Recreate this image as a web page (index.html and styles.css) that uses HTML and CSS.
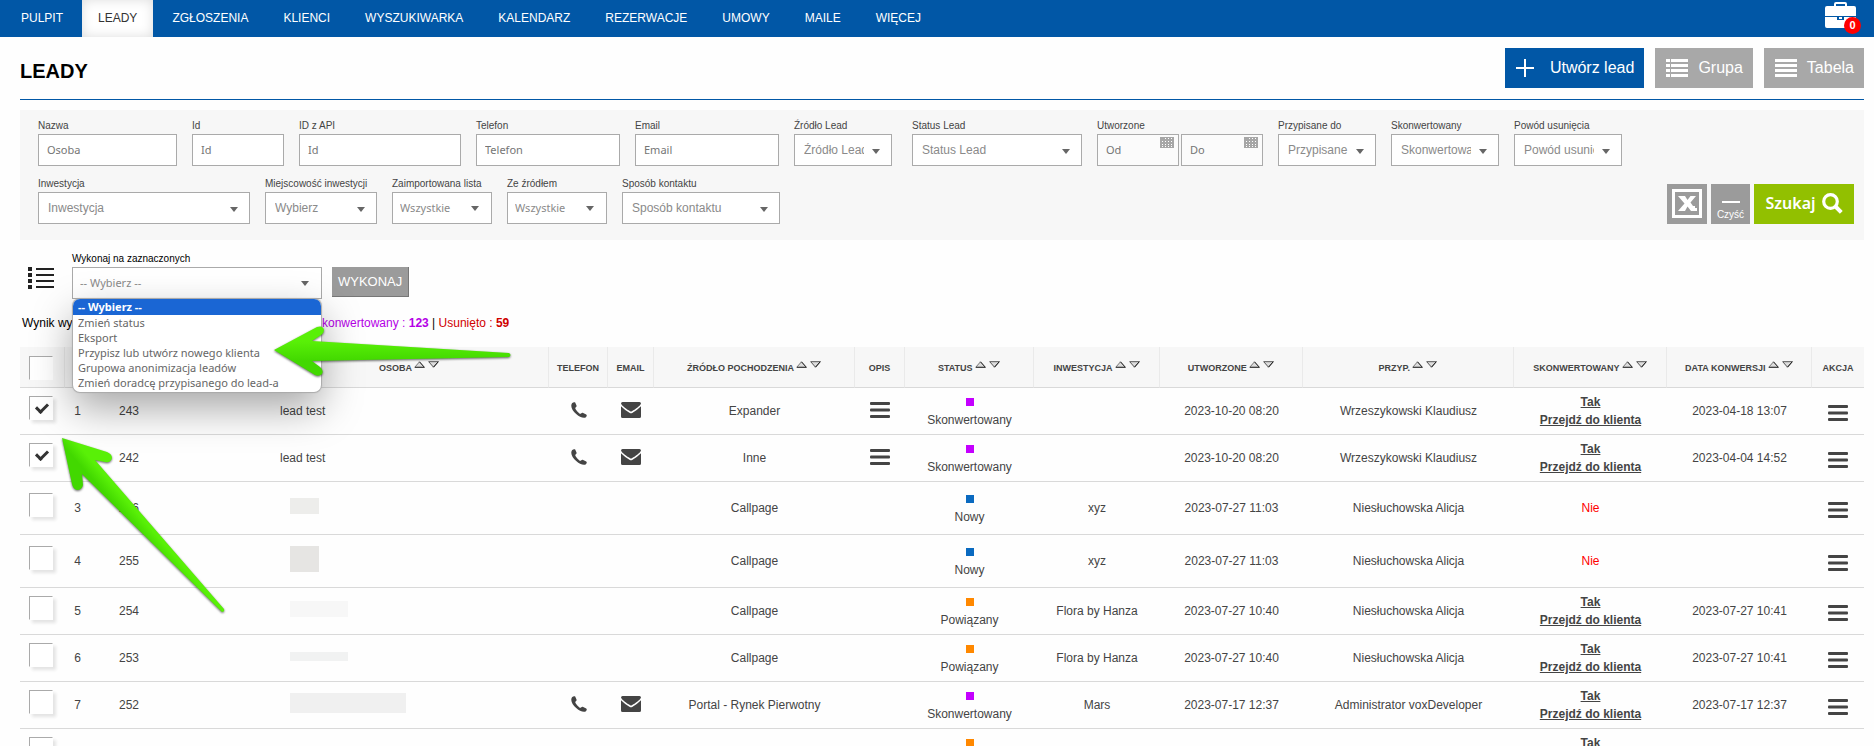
FILE: index.html
```html
<!DOCTYPE html>
<html lang="pl">
<head>
<meta charset="UTF-8">
<meta name="viewport" content="width=device-width, initial-scale=1.0">
<title>Leady</title>
<link rel="stylesheet" href="styles.css">
</head>
<body>

<!-- Shared icons -->
<svg class="icon-defs" aria-hidden="true">
  <symbol id="icon-phone" viewBox="0 0 16 16"><path d="M1 1.2C2 .2 3.600-.2 4.200.6L5.600 3.700C6 4.600 4.600 5.300 4.300 6.100C4 7 7.500 11.300 9 11.700C10 11.900 10.700 10.400 11.700 10.700L15.200 12.400C16.300 13 15.600 14.700 14.600 15.400C10.500 18-3 7.500 1 1.200Z"/></symbol>
  <symbol id="icon-mail" viewBox="0 0 20 16"><path d="M1.500 0H18.500Q20 .2 20 1.800Q18 5 10.800 9.300Q10 9.700 9.200 9.300Q2 5 0 1.800Q0 .2 1.500 0Z"/><path d="M0 4.300Q3 7.500 8.800 11Q10 11.700 11.200 11Q17 7.500 20 4.300V14.500Q20 16 18.500 16H1.500Q0 16 0 14.500Z"/></symbol>
  <symbol id="icon-bars" viewBox="0 0 20 16"><rect width="20" height="3" rx="1"/><rect y="6.500" width="20" height="3" rx="1"/><rect y="13" width="20" height="3" rx="1"/></symbol>
  <symbol id="icon-sort" viewBox="0 0 25 7"><path d="M.7 6.300L5.500.8L10.300 6.300Z" fill="#ddd" stroke="#777" stroke-width="1"/><path d="M5.500.8L10.300 6.300H1" fill="none" stroke="#333"/><path d="M14.700.7H24.300L19.500 6.200Z" fill="#ddd" stroke="#555" stroke-width="1"/><path d="M24.300.7L19.500 6.200" stroke="#222"/></symbol>
  <symbol id="icon-calendar" viewBox="0 0 14 11"><path fill="#a6a6a6" d="M0 0H14V11H0Z"/><path stroke="#fff" stroke-dasharray="1 2" fill="none" d="M5 1.500H14M2 4.500H14M2 7.500H14M2 9.500H14"/></symbol>
</svg>

<nav class="top-nav">
  <a href="#">PULPIT</a>
  <a href="#" class="active">LEADY</a>
  <a href="#">ZGŁOSZENIA</a>
  <a href="#">KLIENCI</a>
  <a href="#">WYSZUKIWARKA</a>
  <a href="#">KALENDARZ</a>
  <a href="#">REZERWACJE</a>
  <a href="#">UMOWY</a>
  <a href="#">MAILE</a>
  <a href="#">WIĘCEJ</a>
  <button class="briefcase" type="button" aria-label="Schowek">
    <svg width="31" height="26" viewBox="0 0 31 26" fill="#fff"><path d="M9 4V2Q9 0 11 0H20Q22 0 22 2V4H29Q31 4 31 6V14H0V6Q0 4 2 4ZM11 4H20V2H11Z"/><path d="M0 15H12V18H19V15H31V24Q31 26 29 26H2Q0 26 0 24Z"/><path d="M14 15H17V17H14Z"/></svg>
    <span class="badge">0</span>
  </button>
</nav>

<main class="page">
  <header class="page-header">
    <h1>LEADY</h1>
    <div class="header-buttons">
      <button class="btn btn-create" type="button">
        <svg width="18" height="18" viewBox="0 0 18 18" stroke="#fff" stroke-width="2"><path d="M9 0V18M0 9H18"/></svg>
        Utwórz lead
      </button>
      <button class="btn btn-view" type="button">
        <svg width="22" height="18" viewBox="0 0 22 18" fill="#fff"><path d="M0 0H4V3H0ZM5 0H22V3H5ZM0 5H4V8H0ZM5 5H22V8H5ZM0 10H4V13H0ZM5 10H22V13H5ZM0 15H4V18H0ZM5 15H22V18H5Z"/></svg>
        Grupa
      </button>
      <button class="btn btn-view" type="button">
        <svg width="22" height="18" viewBox="0 0 22 18" fill="#fff"><path d="M0 0H22V3H0ZM0 5H22V8H0ZM0 10H22V13H0ZM0 15H22V18H0Z"/></svg>
        Tabela
      </button>
    </div>
  </header>

  <form class="filters">
    <div class="filter-row">
      <div class="field w-140"><label for="f-name">Nazwa</label><input id="f-name" type="text" placeholder="Osoba"></div>
      <div class="field w-92"><label for="f-id">Id</label><input id="f-id" type="text" placeholder="Id"></div>
      <div class="field w-162"><label for="f-api">ID z API</label><input id="f-api" type="text" placeholder="Id"></div>
      <div class="field w-144"><label for="f-phone">Telefon</label><input id="f-phone" type="text" placeholder="Telefon"></div>
      <div class="field w-144"><label for="f-email">Email</label><input id="f-email" type="text" placeholder="Email"></div>
      <div class="field w-98"><label for="f-source">Źródło Lead</label><div class="select"><select id="f-source"><option>Źródło Lead</option></select></div></div>
      <div class="field w-170 status-field"><label for="f-status">Status Lead</label><div class="select"><select id="f-status"><option>Status Lead</option></select></div></div>
      <div class="field">
        <label for="f-from">Utworzone</label>
        <div class="date-range">
          <div class="date"><input id="f-from" type="text" placeholder="Od"><svg><use href="#icon-calendar"/></svg></div>
          <div class="date"><input type="text" placeholder="Do" aria-label="Utworzone do"><svg><use href="#icon-calendar"/></svg></div>
        </div>
      </div>
      <div class="field w-98"><label for="f-assigned">Przypisane do</label><div class="select"><select id="f-assigned"><option>Przypisane do</option></select></div></div>
      <div class="field w-108"><label for="f-converted">Skonwertowany</label><div class="select"><select id="f-converted"><option>Skonwertowany</option></select></div></div>
      <div class="field w-108"><label for="f-reason">Powód usunięcia</label><div class="select"><select id="f-reason"><option>Powód usunięcia</option></select></div></div>
    </div>
    <div class="filter-row">
      <div class="field w-212"><label for="f-inv">Inwestycja</label><div class="select"><select id="f-inv"><option>Inwestycja</option></select></div></div>
      <div class="field w-112"><label for="f-city">Miejscowość inwestycji</label><div class="select"><select id="f-city"><option>Wybierz</option></select></div></div>
      <div class="field w-100"><label for="f-import">Zaimportowana lista</label><div class="select plain"><select id="f-import"><option>Wszystkie</option></select></div></div>
      <div class="field w-100"><label for="f-with">Ze źródłem</label><div class="select plain"><select id="f-with"><option>Wszystkie</option></select></div></div>
      <div class="field w-158"><label for="f-contact">Sposób kontaktu</label><div class="select"><select id="f-contact"><option>Sposób kontaktu</option></select></div></div>
      <div class="filter-buttons">
        <button class="btn-excel" type="button" aria-label="Excel">
          <svg width="30" height="29" viewBox="0 0 30 29"><rect x="1.500" y="1.500" width="27" height="26" fill="none" stroke="#fff" stroke-width="3"/><path fill="#fff" d="M6 7H13L15.500 11L18.500 7H24L18.500 13.500L21 17H23V19H25V22H19L15.500 17.500L13 22H6L12.500 14.500Z"/></svg>
        </button>
        <button class="btn-clear" type="button">Czyść</button>
        <button class="btn-search" type="submit">Szukaj
          <svg width="21" height="21" viewBox="0 0 21 21" fill="none" stroke="#fff"><circle cx="8.500" cy="8.500" r="6.800" stroke-width="3.200"/><path d="M13.500 13.500L19.300 19.300" stroke-width="4"/></svg>
        </button>
      </div>
    </div>
  </form>

  <section class="bulk">
    <svg class="bulk-icon" width="26" height="23" viewBox="0 0 26 23" fill="#222"><path d="M0 0H4V4H0ZM8 1H26V3H8ZM0 6H4V10H0ZM8 7H26V9H8ZM0 12H4V16H0ZM8 13H26V15H8ZM0 18H4V22H0ZM8 19H26V21H8Z"/></svg>
    <div class="field bulk-field">
      <label for="bulk-action">Wykonaj na zaznaczonych</label>
      <div class="select plain"><select id="bulk-action"><option>-- Wybierz --</option></select></div>
      <ul class="options" role="listbox">
        <li class="selected" role="option">-- Wybierz --</li>
        <li role="option">Zmień status</li>
        <li role="option">Eksport</li>
        <li role="option">Przypisz lub utwórz nowego klienta</li>
        <li role="option">Grupowa anonimizacja leadów</li>
        <li role="option">Zmień doradcę przypisanego do lead-a</li>
      </ul>
    </div>
    <button class="btn-run" type="button">WYKONAJ</button>
  </section>

  <p class="summary"><span class="summary-total">Wynik wyszukiwania</span><span class="violet">Skonwertowany : <b>123</b></span>&nbsp;|&nbsp;<span class="red">Usunięto : <b>59</b></span></p>

  <table class="leads">
    <colgroup>
      <col class="c-check"><col class="c-no"><col class="c-id"><col class="c-gap"><col class="c-person"><col class="c-phone"><col class="c-mail"><col class="c-source"><col class="c-desc"><col class="c-status"><col class="c-inv"><col class="c-created"><col class="c-assigned"><col class="c-conv"><col class="c-date"><col class="c-action">
    </colgroup>
    <thead>
      <tr>
        <th><input type="checkbox" aria-label="Zaznacz wszystkie"></th>
        <th></th><th></th><th></th>
        <th>OSOBA <svg class="sort"><use href="#icon-sort"/></svg></th>
        <th>TELEFON</th>
        <th>EMAIL</th>
        <th>ŹRÓDŁO POCHODZENIA <svg class="sort"><use href="#icon-sort"/></svg></th>
        <th>OPIS</th>
        <th>STATUS <svg class="sort"><use href="#icon-sort"/></svg></th>
        <th>INWESTYCJA <svg class="sort"><use href="#icon-sort"/></svg></th>
        <th>UTWORZONE <svg class="sort"><use href="#icon-sort"/></svg></th>
        <th>PRZYP. <svg class="sort"><use href="#icon-sort"/></svg></th>
        <th>SKONWERTOWANY <svg class="sort"><use href="#icon-sort"/></svg></th>
        <th>DATA KONWERSJI <svg class="sort"><use href="#icon-sort"/></svg></th>
        <th>AKCJA</th>
      </tr>
    </thead>
    <tbody>
      <tr>
        <td><input type="checkbox" checked aria-label="Lead 243"></td><td>1</td><td>243</td><td></td>
        <td class="person">lead test</td>
        <td><svg class="phone"><use href="#icon-phone"/></svg></td>
        <td><svg class="mail"><use href="#icon-mail"/></svg></td>
        <td>Expander</td>
        <td><svg class="bars"><use href="#icon-bars"/></svg></td>
        <td><i class="dot violet-bg"></i>Skonwertowany</td>
        <td></td><td>2023-10-20 08:20</td><td>Wrzeszykowski Klaudiusz</td>
        <td><a href="#">Tak</a><br><a href="#">Przejdź do klienta</a></td>
        <td>2023-04-18 13:07</td>
        <td class="action"><svg class="bars"><use href="#icon-bars"/></svg></td>
      </tr>
      <tr>
        <td><input type="checkbox" checked aria-label="Lead 242"></td><td>2</td><td>242</td><td></td>
        <td class="person">lead test</td>
        <td><svg class="phone"><use href="#icon-phone"/></svg></td>
        <td><svg class="mail"><use href="#icon-mail"/></svg></td>
        <td>Inne</td>
        <td><svg class="bars"><use href="#icon-bars"/></svg></td>
        <td><i class="dot violet-bg"></i>Skonwertowany</td>
        <td></td><td>2023-10-20 08:20</td><td>Wrzeszykowski Klaudiusz</td>
        <td><a href="#">Tak</a><br><a href="#">Przejdź do klienta</a></td>
        <td>2023-04-04 14:52</td>
        <td class="action"><svg class="bars"><use href="#icon-bars"/></svg></td>
      </tr>
      <tr class="tall">
        <td><input type="checkbox" aria-label="Lead 256"></td><td>3</td><td>256</td><td></td>
        <td class="person"><span class="mask mask-a"></span></td>
        <td></td><td></td><td>Callpage</td><td></td>
        <td><i class="dot blue-bg"></i>Nowy</td>
        <td>xyz</td><td>2023-07-27 11:03</td><td>Niesłuchowska Alicja</td>
        <td class="no">Nie</td><td></td>
        <td class="action"><svg class="bars"><use href="#icon-bars"/></svg></td>
      </tr>
      <tr class="tall">
        <td><input type="checkbox" aria-label="Lead 255"></td><td>4</td><td>255</td><td></td>
        <td class="person"><span class="mask mask-b"></span></td>
        <td></td><td></td><td>Callpage</td><td></td>
        <td><i class="dot blue-bg"></i>Nowy</td>
        <td>xyz</td><td>2023-07-27 11:03</td><td>Niesłuchowska Alicja</td>
        <td class="no">Nie</td><td></td>
        <td class="action"><svg class="bars"><use href="#icon-bars"/></svg></td>
      </tr>
      <tr>
        <td><input type="checkbox" aria-label="Lead 254"></td><td>5</td><td>254</td><td></td>
        <td class="person"><span class="mask mask-c"></span></td>
        <td></td><td></td><td>Callpage</td><td></td>
        <td><i class="dot orange-bg"></i>Powiązany</td>
        <td>Flora by Hanza</td><td>2023-07-27 10:40</td><td>Niesłuchowska Alicja</td>
        <td><a href="#">Tak</a><br><a href="#">Przejdź do klienta</a></td>
        <td>2023-07-27 10:41</td>
        <td class="action"><svg class="bars"><use href="#icon-bars"/></svg></td>
      </tr>
      <tr>
        <td><input type="checkbox" aria-label="Lead 253"></td><td>6</td><td>253</td><td></td>
        <td class="person"><span class="mask mask-d"></span></td>
        <td></td><td></td><td>Callpage</td><td></td>
        <td><i class="dot orange-bg"></i>Powiązany</td>
        <td>Flora by Hanza</td><td>2023-07-27 10:40</td><td>Niesłuchowska Alicja</td>
        <td><a href="#">Tak</a><br><a href="#">Przejdź do klienta</a></td>
        <td>2023-07-27 10:41</td>
        <td class="action"><svg class="bars"><use href="#icon-bars"/></svg></td>
      </tr>
      <tr>
        <td><input type="checkbox" aria-label="Lead 252"></td><td>7</td><td>252</td><td></td>
        <td class="person"><span class="mask mask-e"></span></td>
        <td><svg class="phone"><use href="#icon-phone"/></svg></td>
        <td><svg class="mail"><use href="#icon-mail"/></svg></td>
        <td>Portal - Rynek Pierwotny</td><td></td>
        <td><i class="dot violet-bg"></i>Skonwertowany</td>
        <td>Mars</td><td>2023-07-17 12:37</td><td>Administrator voxDeveloper</td>
        <td><a href="#">Tak</a><br><a href="#">Przejdź do klienta</a></td>
        <td>2023-07-17 12:37</td>
        <td class="action"><svg class="bars"><use href="#icon-bars"/></svg></td>
      </tr>
      <tr>
        <td><input type="checkbox" aria-label="Lead"></td><td></td><td></td><td></td>
        <td></td><td></td><td></td><td></td><td></td>
        <td><i class="dot orange-bg"></i>&nbsp;</td>
        <td></td><td></td><td></td>
        <td><a href="#">Tak</a><br>&nbsp;</td>
        <td></td><td></td>
      </tr>
    </tbody>
  </table>
</main>

<!-- Pointer arrows over the page -->
<svg class="arrows" width="520" height="620" viewBox="0 0 520 620" aria-hidden="true">
  <defs>
    <linearGradient id="green-a" x1="0" y1="0" x2="0" y2="1"><stop offset=".3" stop-color="#59f007"/><stop offset=".7" stop-color="#42d800"/></linearGradient>
    <linearGradient id="green-b" gradientUnits="userSpaceOnUse" x1="101" y1="465" x2="86" y2="478"><stop offset=".2" stop-color="#59f007"/><stop offset=".8" stop-color="#42d800"/></linearGradient>
  </defs>
  <path fill="url(#green-a)" d="M274 350L317 327Q323 325 324 330Q324 333 321 335L312 341L509 353Q512 355 509 357L312 361L320 367Q324 370 322 374Q319 377 315 375Z"/>
  <path fill="url(#green-b)" d="M62 438L107 452Q112 454 112 458Q111 463 105 462L95 460L224 609Q225 612 222 612L82 474L83 485Q82 490 77 490Q73 489 72 484Z"/>
</svg>

</body>
</html>
```

FILE: styles.css
```css
/* --- Base --- */
* {
  box-sizing: border-box;
}

body {
  margin: 0;
  background: #fefefe;
  color: #444;
  font-family: "Liberation Sans", Arial, sans-serif;
  font-size: 12px;
  line-height: 18px;
  overflow: hidden;
}

button,
input,
select {
  font-family: inherit;
  margin: 0;
}

button {
  border: none;
  border-radius: 0;
  color: #fff;
  cursor: pointer;
}

.icon-defs {
  display: none;
}

/* --- Navigation --- */
.top-nav {
  display: flex;
  gap: 3px;
  height: 37px;
  padding: 0 15px 0 5px;
  background: #0157a6;
}

.top-nav a {
  padding: 0 16px;
  line-height: 36px;
  color: #fff;
  text-decoration: none;
}

.top-nav a.active {
  background: #fff;
  color: #333;
  box-shadow: inset 0 0 12px #ddd;
}

.briefcase {
  position: relative;
  margin-left: auto;
  padding: 2px 3px 0 0;
  background: none;
  display: flex;
}

.badge {
  position: absolute;
  top: 17px;
  right: -2px;
  width: 17px;
  height: 17px;
  border-radius: 50%;
  background: red;
  font-size: 11px;
  font-weight: bold;
  line-height: 17px;
}

/* --- Page header --- */
.page {
  padding: 0 10px 0 20px;
}

.page-header {
  display: flex;
  justify-content: space-between;
  height: 63px;
  padding-top: 11px;
  border-bottom: 1px solid #0157a6;
}

h1 {
  margin: 0;
  color: #000;
  font-size: 20px;
  line-height: 46px;
}

.header-buttons {
  display: flex;
  gap: 11px;
}

.btn {
  display: flex;
  align-items: center;
  height: 40px;
  padding: 0 10px 0 11px;
  font-size: 16px;
}

.btn-create {
  gap: 16px;
  background: #0157a6;
}

.btn-view {
  gap: 10px;
  background: #a8a8a8;
}

/* --- Filters --- */
.filters {
  margin-top: 10px;
  padding: 8px 10px 16px 18px;
  background: #f7f7f7;
}

.filter-row {
  display: flex;
  gap: 15px;
}

.filter-row + .filter-row {
  margin-top: 10px;
}

.field label {
  display: block;
  font-size: 10px;
  line-height: 16px;
  white-space: nowrap;
}

.w-92 { width: 92px; }
.w-98 { width: 98px; }
.w-100 { width: 100px; }
.w-108 { width: 108px; }
.w-112 { width: 112px; }
.w-140 { width: 139px; }
.w-144 { width: 144px; }
.w-158 { width: 158px; }
.w-162 { width: 162px; }
.w-170 { width: 170px; }
.w-212 { width: 212px; }

.status-field {
  margin-left: 5px;
}

.field input,
.field select {
  display: block;
  width: 100%;
  height: 32px;
  padding: 0 8px 2px;
  border: 1px solid #aaa;
  border-radius: 0;
  background: #fff;
  color: #8a8a8a;
  font-size: 12px;
}

.field input {
  font-family: "Noto Sans", sans-serif;
  font-size: 11px;
}

.field input::placeholder {
  color: #757575;
}

.field select {
  appearance: none;
  padding: 0 27px 0 9px;
}

.field .plain select {
  padding: 0 27px 2px 7px;
  font-family: "Noto Sans", sans-serif;
  font-size: 11px;
}

.select {
  position: relative;
}

.select::after {
  content: "";
  position: absolute;
  top: 15px;
  right: 12px;
  border: 4px solid transparent;
  border-top: 5px solid #666;
  border-bottom: none;
}

.plain::after {
  top: 14px;
  right: 13px;
}

.date-range {
  display: flex;
  gap: 2px;
}

.date {
  position: relative;
  width: 82px;
}

.date input {
  background: #fbfbfb;
}

.date svg {
  position: absolute;
  top: 3px;
  right: 5px;
  width: 14px;
  height: 11px;
}

.filter-buttons {
  display: flex;
  align-items: flex-end;
  gap: 4px;
  margin-left: auto;
}

.filter-buttons button {
  height: 40px;
}

.btn-excel {
  width: 40px;
  padding: 5px;
  background: #9b9b9b;
}

.btn-clear {
  width: 39px;
  padding: 12px 0 0;
  background: #9b9b9b;
  font-size: 10px;
}

.btn-clear::before {
  content: "";
  display: block;
  width: 18px;
  height: 2px;
  margin: 0 auto 6px;
  background: #fff;
}

.btn-search {
  display: flex;
  align-items: center;
  justify-content: center;
  gap: 6px;
  width: 100px;
  padding: 0 0 2px;
  background: #92c000;
  font-family: "Noto Sans", sans-serif;
  font-size: 16px;
  font-weight: 600;
}

/* --- Bulk actions --- */
.bulk {
  display: flex;
  align-items: flex-end;
  margin-top: 11px;
  padding-left: 8px;
}

.bulk-icon {
  margin: 0 18px 9px 0;
}

.bulk-field {
  position: relative;
  width: 250px;
}

.bulk-field label {
  color: #000;
}

.btn-run {
  height: 30px;
  margin: 0 0 2px 10px;
  padding: 0 6px 1px;
  border-right: 1px solid #777;
  border-bottom: 1px solid #777;
  background: #9b9b9b;
  font-size: 13px;
}

.options {
  position: absolute;
  top: 100%;
  left: 1px;
  right: 1px;
  z-index: 2;
  margin: 0;
  padding: 0 0 2px;
  overflow: hidden;
  border-radius: 7px;
  background: #fff;
  box-shadow: 0 0 1px 1px #aaa, 0 16px 40px rgba(0, 0, 0, .35);
  color: #666;
  font-family: "Noto Sans", sans-serif;
  font-size: 11px;
  list-style: none;
}

.options li {
  padding-left: 5px;
  line-height: 15px;
  white-space: nowrap;
}

.options .selected {
  background: #1a66d4;
  color: #fff;
  font-weight: bold;
  line-height: 16px;
}

/* --- Result summary --- */
.summary {
  display: flex;
  margin: 15px 0;
  color: #000;
  padding-left: 2px;
}

.summary-total {
  width: 292px;
}

.violet { color: #b400e6; }
.red { color: #d00000; }

/* --- Leads table --- */
.leads {
  width: 100%;
  table-layout: fixed;
  border-collapse: separate;
  border-spacing: 0;
  text-align: center;
}

.c-check { width: 45px; }
.c-no { width: 25px; }
.c-id { width: 78px; }
.c-gap { width: 102px; }
.c-person { width: 279px; }
.c-phone { width: 59px; }
.c-mail { width: 46px; }
.c-source { width: 201px; }
.c-desc { width: 50px; }
.c-status { width: 129px; }
.c-inv { width: 126px; }
.c-created { width: 143px; }
.c-assigned { width: 211px; }
.c-conv { width: 153px; }
.c-date { width: 145px; }
.c-action { width: 52px; }

.leads th {
  height: 41px;
  padding: 1px 0 0;
  border-right: 1px solid #eaeaea;
  border-bottom: 1px solid #d9d9d9;
  background: #f7f7f7;
  font-size: 9px;
  white-space: nowrap;
}

.leads th:last-child {
  border-right: none;
}

.leads td {
  padding: 5px 0;
  border-bottom: 1px solid #d9d9d9;
}

.leads .tall td {
  padding: 8px 0;
}

.leads td.person {
  padding-left: 10px;
  text-align: left;
}

.leads a {
  color: #444;
  font-weight: bold;
}

.leads .no {
  color: red;
}

.leads input {
  appearance: none;
  display: block;
  position: relative;
  width: 24px;
  height: 24px;
  margin: 0 0 0 9px;
  border: 1px solid #fff;
  border-top-color: #aaa;
  border-left-color: #aaa;
  background: #fff;
}

.leads td input {
  margin-bottom: 6px;
  box-shadow: 3px 3px 3px #e4e4e4;
}

.leads input:checked::after {
  content: "";
  position: absolute;
  top: 4px;
  left: 8px;
  width: 5px;
  height: 9px;
  border: solid #333;
  border-width: 0 3px 3px 0;
  transform: rotate(45deg);
}

.dot {
  display: block;
  width: 8px;
  height: 8px;
  margin: 5px auto;
}

.violet-bg { background: #c400ff; }
.blue-bg { background: #0a6ac0; }
.orange-bg { background: #ff8800; }

.sort {
  width: 25px;
  height: 7px;
  vertical-align: 3px;
}

.phone,
.mail,
.bars {
  display: block;
  width: 20px;
  height: 16px;
  margin: 0 auto 2px;
  fill: #444;
}

.phone {
  width: 16px;
}

.action .bars {
  margin: 4px auto 0;
}

/* Blurred-out personal data */
.mask {
  display: block;
  width: 29px;
  height: 16px;
  margin: 0 0 4px 10px;
  background: #ededeb;
}

.mask-b {
  height: 26px;
  background: #e6e5e3;
}

.mask-c,
.mask-d {
  width: 58px;
  background: #f7f7f7;
}

.mask-d {
  height: 9px;
  background: #f1f2f2;
}

.mask-e {
  width: 116px;
  height: 20px;
  background: #f0f0f0;
}

/* --- Pointer arrows --- */
.arrows {
  position: absolute;
  top: 0;
  left: 0;
  z-index: 3;
  filter: drop-shadow(0 1px 1px rgba(0, 0, 0, .6));
  pointer-events: none;
}
```
